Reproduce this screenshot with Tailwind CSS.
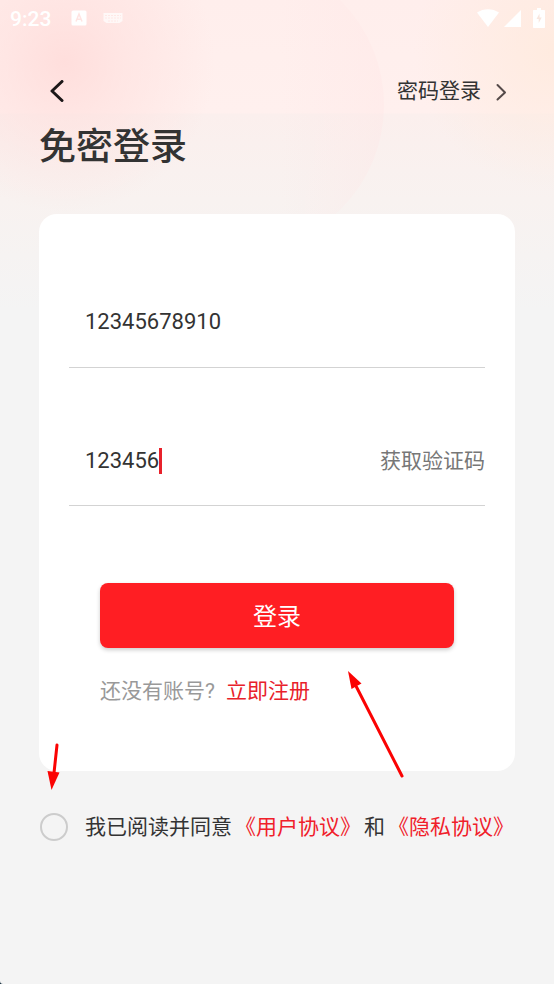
<!DOCTYPE html>
<html lang="zh-CN">
<head>
<meta charset="utf-8">
<meta name="viewport" content="width=device-width, initial-scale=1">
<title>免密登录</title>
<script src="https://cdn.jsdelivr.net/npm/@tailwindcss/browser@4"></script>
</head>
<body class="relative min-h-screen overflow-x-hidden bg-[#f4f4f4] font-['Roboto','Noto_Sans_CJK_SC',sans-serif] text-[21px] leading-8 text-[#333333]">

<!-- Decorative backdrop -->
<div aria-hidden="true" class="absolute inset-x-0 top-0 h-[320px] overflow-hidden bg-[linear-gradient(to_bottom,#ffeeec_0px,#fff0ee_113px,#fbefed_114px,#f8f2f0_200px,#f4f4f4_310px)]">
  <div class="absolute inset-0 bg-[radial-gradient(circle_at_65px_62px,#ffdad8cc_0px,#ffdddb80_60px,#ffe4e200_150px)]"></div>
  <div class="absolute inset-0 bg-[radial-gradient(circle_at_100%_50px,#ffeadccc_0px,#ffeee500_140px)]"></div>
  <div class="absolute -top-[42px] left-[90px] size-[294px] rounded-full bg-[linear-gradient(to_right,#ffe4e400_65%,#ffe3e34d)]"></div>
</div>

<div class="relative">
  <!-- Status bar -->
  <div class="flex h-9 items-center pl-[10px] pr-[9px] text-white">
    <span class="pt-[2px] text-[21px] font-medium leading-9">9:23</span>
    <svg class="ml-5 h-4 w-4" viewBox="0 0 16 16" aria-hidden="true"><rect x="0.5" y="0.5" width="15" height="15" rx="1.5" fill="#fff"/><path d="M5 11.5 8 4l3 7.5M6 9.2h4" fill="none" stroke="#ffe4e2" stroke-width="1.5"/></svg>
    <svg class="ml-4 h-[13px] w-5" viewBox="0 0 20 13" aria-hidden="true"><path d="M.5 1h19v8l-3 2h-13l-3-2Z" fill="#fff" opacity=".7"/><path d="M2 3.500h16M2 6h16M5 9h10" stroke="#ffe8e6" stroke-width="1" stroke-dasharray="2 1"/></svg>
    <svg class="ml-auto h-[18px] w-[22px]" viewBox="0 0 22 18" aria-hidden="true"><path d="M0 3.500C6.500-1 15.500-1 22 3.500L11 18Z" fill="#fff"/></svg>
    <svg class="ml-[5px] h-[17px] w-[17px]" viewBox="0 0 17 17" aria-hidden="true"><path d="M17 0v17H0Z" fill="#fff"/></svg>
    <svg class="ml-3 h-5 w-3" viewBox="0 0 12 20" aria-hidden="true"><path d="M4 0h4v2h3.300q.7 0 .7.700V19.300q0 .7-.7.700H.700q-.7 0-.7-.7V2.700q0-.7.7-.7H4Z" fill="#fff"/><path d="M6.500 5.500 3.500 11h2.200v4l3-5.500H6.500Z" fill="#f8e6de"/></svg>
  </div>

  <!-- Top navigation -->
  <header class="flex h-[78px] items-center justify-between pl-[50px] pr-[47px] pt-8">
    <button type="button" aria-label="返回" class="flex h-8 items-center">
      <svg class="h-[22px] w-[14px]" viewBox="0 0 14 22" fill="none" stroke="#1c1718" stroke-width="3" stroke-linecap="round" stroke-linejoin="round" aria-hidden="true"><path d="M12 1.500 2 11l10 9.500"/></svg>
    </button>
    <a href="#" class="flex items-center gap-[15px]">密码登录
      <svg class="mt-[2px] h-[18px] w-[11px]" viewBox="0 0 11 18" fill="none" stroke="#554a49" stroke-width="2" stroke-linecap="round" stroke-linejoin="round" aria-hidden="true"><path d="M1.500 2 9 9.500 1.500 16.500"/></svg>
    </a>
  </header>

  <main class="px-[39px]">
    <h1 class="h-[100px] pt-[10px] text-[37px] font-medium leading-12">免密登录</h1>

    <form id="login">
      <div class="h-[557px] rounded-[18px] bg-white px-[30px] pt-[62px]">
        <div class="flex h-[92px] items-center border-b border-[#d3d3d3] px-4">
          <input type="tel" aria-label="手机号" value="12345678910" class="w-full bg-transparent text-[22px] outline-none">
        </div>
        <div class="mt-[46px] flex h-[92px] items-center border-b border-[#d3d3d3] pl-4 pt-[2px]">
          <input type="text" inputmode="numeric" aria-label="验证码" value="123456" class="bg-transparent text-[22px] outline-none [field-sizing:content]">
          <span aria-hidden="true" class="h-[26px] w-[3px] bg-[#e8212b]"></span>
          <button type="button" class="ml-auto text-[#777777]">获取验证码</button>
        </div>
        <div class="mx-[31px] mt-[77px]">
          <button type="submit" class="block h-[65px] w-full rounded-lg bg-[#ff1e23] pt-[2px] text-2xl text-white shadow-[0_2px_4px_rgba(0,0,0,0.2)]">登录</button>
          <p class="mt-[27px] flex gap-[11px] text-[#999999]">还没有账号? <a href="#" class="text-[#e8212b]">立即注册</a></p>
        </div>
      </div>
    </form>

    <div class="mt-10 flex items-center">
      <input id="agree" form="login" type="checkbox" class="ml-px size-7 shrink-0 appearance-none rounded-full border-2 border-[#cccccc] checked:bg-[#ff1e23]">
      <label for="agree" class="ml-[17px] flex gap-[3px] whitespace-nowrap"><span>我已阅读并同意</span><a href="#" class="text-[#f0202a]">《用户协议》</a><span>和</span><a href="#" class="text-[#f0202a]">《隐私协议》</a></label>
    </div>
  </main>
</div>

<!-- Annotation arrows -->
<svg class="pointer-events-none absolute left-[340px] top-[665px] h-[120px] w-[70px]" viewBox="340 665 70 120" aria-hidden="true"><path d="M356.500 687 402 776" stroke="#fb0303" stroke-width="3" stroke-linecap="round"/><path d="M348 671 361.500 683.500 351.500 689Z" fill="#fb0303"/></svg>
<svg class="pointer-events-none absolute left-[40px] top-[740px] h-[55px] w-[25px]" viewBox="40 740 25 55" aria-hidden="true"><path d="M57 745 54 773" stroke="#fb0303" stroke-width="3" stroke-linecap="round"/><path d="M47.500 771 59.500 772.500 51.500 790Z" fill="#fb0303"/></svg>
<svg class="pointer-events-none absolute bottom-0 left-0 size-[3px]" viewBox="0 0 3 3" aria-hidden="true"><path d="M0 0Q0 3 3 3H0Z" fill="#102838"/></svg>
</body>
</html>
